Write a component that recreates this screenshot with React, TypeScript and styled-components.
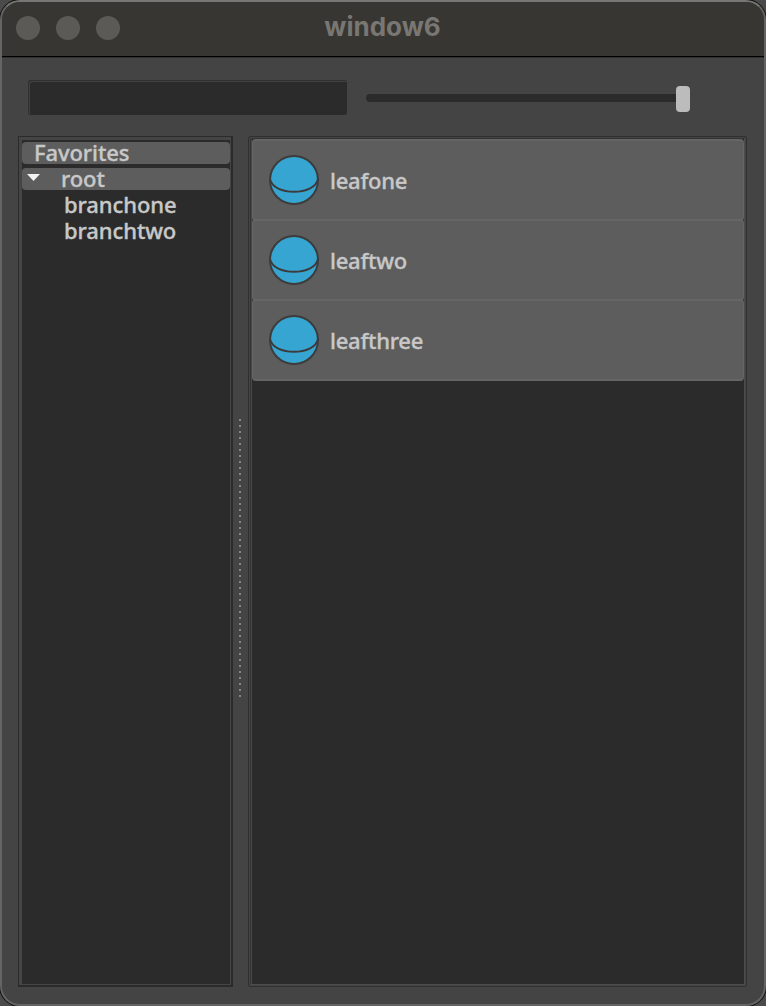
import React from 'react';
import styled, { createGlobalStyle } from 'styled-components';

const GlobalStyle = createGlobalStyle`
  * { box-sizing: border-box; }
  body { margin: 0; background: #4b4b4b; overflow: hidden; }
`;

const Window = styled.main`
  width: 766px;
  height: 1006px;
  display: flex;
  flex-direction: column;
  border: 2px solid #646464;
  border-top-color: #767674;
  border-radius: 20px;
  background: #444;
  overflow: hidden;
  box-shadow: 0 0 0 1px #111;
  color: #c8c8c8;
  font-family: 'Noto Sans', 'Open Sans', sans-serif;
  font-weight: 500;
  font-size: 22px;
  -webkit-text-stroke: 0.35px currentColor;
`;

const TitleBar = styled.header`
  flex: none;
  height: 55px;
  display: grid;
  grid-template-columns: 1fr auto 1fr;
  background: #383632;
  border-bottom: 1px solid #000;
`;

const Lights = styled.div`
  display: flex;
  gap: 16px;
  padding: 14px 0 0 14px;
`;

const Light = styled.span`
  width: 24px;
  height: 24px;
  border-radius: 50%;
  background: #5c5a56;
`;

const Title = styled.h1`
  margin: 0;
  padding: 9px 1px 0 0;
  font: 700 26px/32px Inter, sans-serif;
  color: #787773;
  -webkit-text-stroke: 0;
`;

const Toolbar = styled.div`
  flex: none;
  height: 79px;
  display: flex;
  align-items: flex-start;
  padding: 22px 0 0 26px;
  border-top: 1px solid #303030;
`;

const SearchField = styled.input`
  width: 319px;
  height: 35px;
  padding: 0 8px;
  border: 0;
  border-radius: 3px;
  outline: 0;
  color: inherit;
  font: inherit;
  background: #2b2b2b;
  box-shadow: inset 1px 1px #303030, inset 2px 2px #414141;
`;

const Slider = styled.div`
  display: flex;
  align-items: center;
  margin: 6px 0 0 19px;
  height: 26px;
`;

const Track = styled.div`
  width: 310px;
  height: 8px;
  margin-bottom: 2px;
  border-radius: 4px 0 0 4px;
  background: #2b2b2b;
`;

const Handle = styled.div`
  width: 14px;
  height: 26px;
  border-radius: 4px;
  background: #bcbcbc;
`;

const Panes = styled.div`
  display: flex;
  height: 851px;
  padding-left: 16px;
`;

const TreeFrame = styled.section`
  width: 215px;
  border: 1px solid #2b2b2b;
  border-width: 1px 2px 2px 1px;
`;

const Tree = styled.div`
  height: 100%;
  border: solid #454545;
  border-width: 3px 1px 1px 3px;
  background: #2b2b2b;
  padding-top: 2px;
`;

const TreeRow = styled.div<{ $header?: boolean; $indent: number }>`
  height: ${p => (p.$header ? 22 : 26)}px;
  margin-bottom: ${p => (p.$header ? 4 : 0)}px;
  padding: 0 0 2px ${p => p.$indent}px;
  display: flex;
  align-items: center;
  border-radius: 4px;
  background: ${p => (p.$header ? '#5d5d5d' : 'transparent')};
  line-height: 20px;
  letter-spacing: -0.1px;
  white-space: nowrap;
`;

const Branches = styled.div`
  margin-top: -2px;
`;

const Arrow = styled.svg`
  width: 13px;
  height: 7px;
  margin: 0 21px 1px 0;
`;

const Splitter = styled.div`
  width: 15px;
  padding: 283px 0 0 6px;
`;

const Grip = styled.div`
  width: 2px;
  height: 278px;
  background: repeating-linear-gradient(#858585 0 2px, transparent 2px 6px);
`;

const ListFrame = styled.section`
  width: 499px;
  padding: 1px;
  border: 1px solid #303030;
  border-radius: 2px;
`;

const List = styled.div`
  height: 100%;
  border: 1px solid #343434;
  border-right-color: #4c4c4c;
  border-bottom-color: #4c4c4c;
  padding: 0 0 0 1px;
  background: linear-gradient(to right, #484848 1px, #2b2b2b 1px);
`;

const Leaf = styled.div`
  height: 82px;
  margin-bottom: -2px;
  padding: 0 0 1px 16px;
  display: flex;
  align-items: center;
  border: 2px solid #656565;
  border-width: 2px 1px;
  border-radius: 4px;
  background: #5d5d5d;
`;

const Ball = styled.svg`
  width: 50px;
  height: 50px;
  margin-right: 11px;
`;

const LeafName = styled.span`
  line-height: 26px;
  letter-spacing: -0.25px;
`;

const leaves = ['leafone', 'leaftwo', 'leafthree'];

export default function App() {
  return (
    <>
      <GlobalStyle />
      <Window>
        <TitleBar>
          <Lights><Light /><Light /><Light /></Lights>
          <Title>window6</Title>
        </TitleBar>
        <Toolbar>
          <SearchField aria-label="Search" />
          <Slider><Track /><Handle /></Slider>
        </Toolbar>
        <Panes>
          <TreeFrame>
            <Tree>
              <TreeRow $header $indent={12}>Favorites</TreeRow>
              <TreeRow $header $indent={5}>
                <Arrow viewBox="0 0 13 7"><path d="M0 0H13L6.5 7Z" fill="#f2f2f2" /></Arrow>
                root
              </TreeRow>
              <Branches>
                <TreeRow $indent={42}>branchone</TreeRow>
                <TreeRow $indent={42}>branchtwo</TreeRow>
              </Branches>
            </Tree>
          </TreeFrame>
          <Splitter><Grip /></Splitter>
          <ListFrame>
            <List>
              {leaves.map(name => (
                <Leaf key={name}>
                  <Ball viewBox="0 0 50 50" fill="none" stroke="#3c3c3c" strokeWidth="2">
                    <circle cx="25" cy="25" r="24" fill="#37a5d2" />
                    <path d="M1 24C4 41 46 41 49 24" />
                  </Ball>
                  <LeafName>{name}</LeafName>
                </Leaf>
              ))}
            </List>
          </ListFrame>
        </Panes>
      </Window>
    </>
  );
}
